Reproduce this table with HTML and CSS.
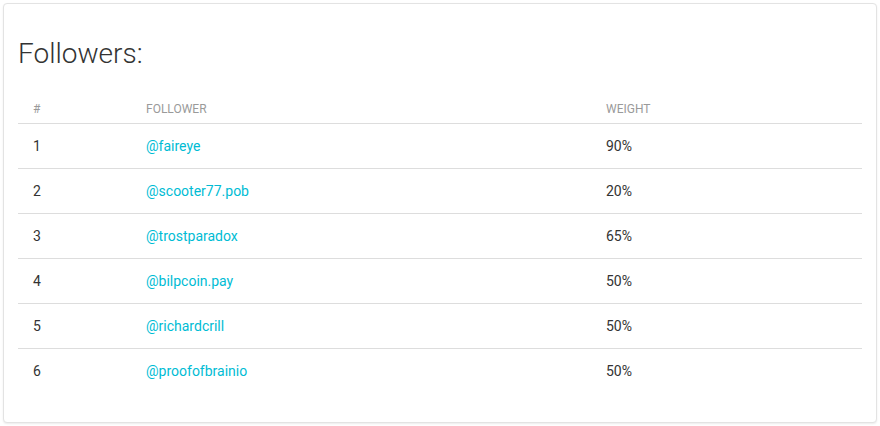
FILE: index.html
```html
<!DOCTYPE html>
<html>
<head>
<meta charset="utf-8">
<link rel="stylesheet" href="styles.css">
</head>
<body>
<div class="card">
  <h2 class="title">Followers:</h2>
  <table class="table">
    <thead>
      <tr><th class="c-num">#</th><th class="c-name">Follower</th><th class="c-weight">Weight</th></tr>
    </thead>
    <tbody>
      <tr><td>1</td><td><a href="#">@faireye</a></td><td>90%</td></tr>
      <tr><td>2</td><td><a href="#">@scooter77.pob</a></td><td>20%</td></tr>
      <tr><td>3</td><td><a href="#">@trostparadox</a></td><td>65%</td></tr>
      <tr><td>4</td><td><a href="#">@bilpcoin.pay</a></td><td>50%</td></tr>
      <tr><td>5</td><td><a href="#">@richardcrill</a></td><td>50%</td></tr>
      <tr><td>6</td><td><a href="#">@proofofbrainio</a></td><td>50%</td></tr>
    </tbody>
  </table>
</div>
</body>
</html>
```
FILE: styles.css
```css
html, body {
  margin: 0;
  background: #ffffff;
}
body {
  padding: 3px;
  font-family: Roboto, "Liberation Sans", sans-serif;
  color: #333333;
}
.card {
  height: 420px;
  box-sizing: border-box;
  border: 1px solid #e3e3e3;
  border-radius: 4px;
  box-shadow: 0 1px 2px rgba(0,0,0,0.08);
  padding: 0 14px 14px 14px;
  background: #fff;
}
.title {
  margin: 33px 0 19px 0;
  font-size: 28px;
  font-weight: 300;
  line-height: 33px;
  color: #333;
}
.table {
  width: 100%;
  border-collapse: collapse;
}
.table th {
  font-size: 12px;
  font-weight: 400;
  text-transform: uppercase;
  color: #9a9a9a;
  text-align: left;
  line-height: 17px;
  padding: 12px 15px 5px 15px;
  border-bottom: 1px solid #dddddd;
}
.c-num { width: 83px; }
.c-name { width: 430px; }
.table td {
  font-size: 14px;
  line-height: 20px;
  padding: 12px 15px 12px 15px;
  color: #333;
}
.table tbody tr + tr td {
  border-top: 1px solid #dddddd;
}
.table a {
  color: #00bcd4;
  text-decoration: none;
}
```
